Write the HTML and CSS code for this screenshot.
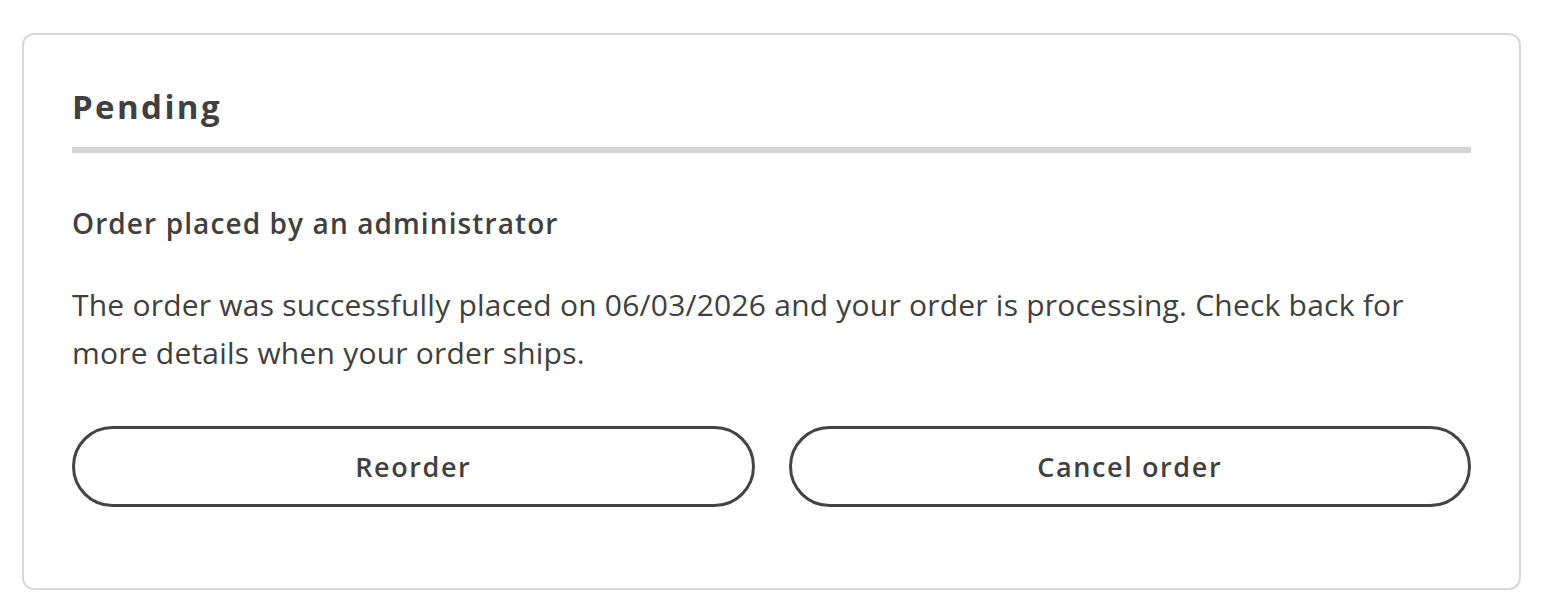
FILE: index.html
```html
<!DOCTYPE html>
<html lang="en">
<head>
    <meta charset="UTF-8">
    <meta name="viewport" content="width=device-width, initial-scale=1.0">
    <title>Order status</title>
    <link rel="stylesheet" href="styles.css">
</head>
<body>
    <div class="order-card">
        <h2 class="order-title">Pending</h2>

        <div class="order-body">
            <h3 class="order-subtitle">Order placed by an administrator</h3>
            <p class="order-text">The order was successfully placed on 06/03/2026 and your order is processing. Check back for more details when your order ships.</p>
        </div>

        <div class="order-actions">
            <button class="btn-outline">Reorder</button>
            <button class="btn-outline">Cancel order</button>
        </div>
    </div>
</body>
</html>
```

FILE: styles.css
```css
* {
    margin: 0;
    padding: 0;
    box-sizing: border-box;
}

body {
    font-family: "Open Sans", "Noto Sans", sans-serif;
    background: #fff;
    color: #404040;
    padding: 33px 25px 0 22px;
}

.order-card {
    border: 2px solid #d8d8d8;
    border-radius: 12px;
    padding: 50px 48px 81px;
}

.order-title {
    font-size: 33px;
    font-weight: 700;
    line-height: 44px;
    letter-spacing: 2.4px;
    padding-bottom: 18px;
    border-bottom: 6px solid #d5d5d5;
}

.order-body {
    padding-top: 53px;
}

.order-subtitle {
    font-size: 28px;
    font-weight: 600;
    line-height: 34px;
    letter-spacing: 1.1px;
}

.order-text {
    max-width: 1390px;
    margin-top: 41px;
    font-size: 30px;
    line-height: 48px;
    letter-spacing: 0.22px;
}

.order-actions {
    display: flex;
    gap: 34px;
    margin-top: 49px;
}

.btn-outline {
    flex: 1;
    height: 81px;
    border: 3px solid #444;
    border-radius: 41px;
    background: #fff;
    color: #404040;
    font-family: inherit;
    font-size: 27px;
    font-weight: 600;
    letter-spacing: 1.6px;
    cursor: pointer;
}
```
